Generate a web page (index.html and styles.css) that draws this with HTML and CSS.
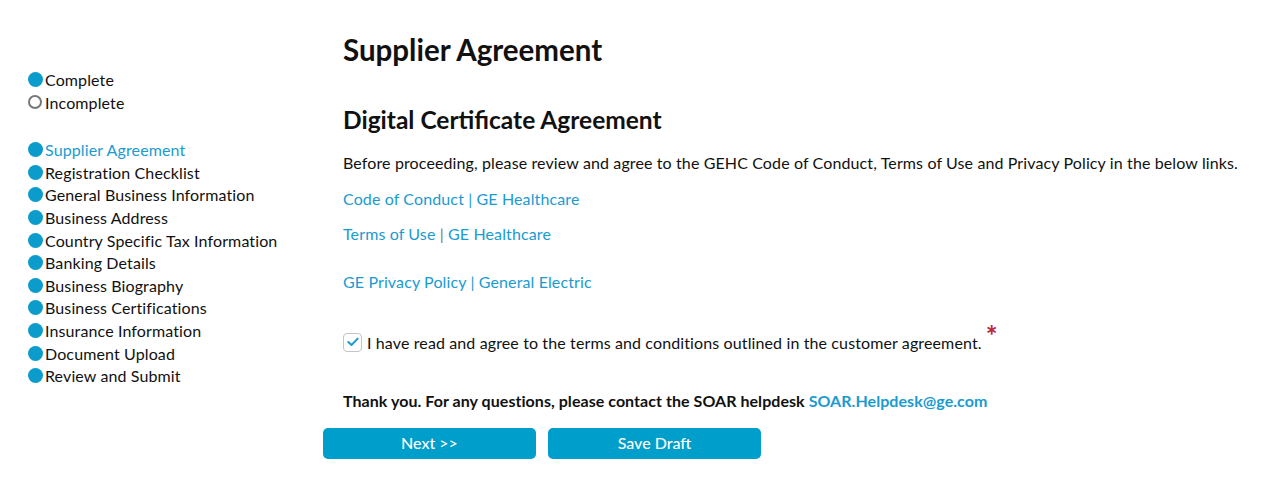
FILE: index.html
```html
<!DOCTYPE html>
<html>
<head>
<meta charset="utf-8">
<link rel="stylesheet" href="styles.css">
</head>
<body>
<div class="page">
  <aside class="sidebar">
    <ul class="legend">
      <li><span class="dot"></span>Complete</li>
      <li><span class="dot empty"></span>Incomplete</li>
    </ul>
    <ul class="steps">
      <li class="active"><span class="dot"></span>Supplier Agreement</li>
      <li><span class="dot"></span>Registration Checklist</li>
      <li><span class="dot"></span>General Business Information</li>
      <li><span class="dot"></span>Business Address</li>
      <li><span class="dot"></span>Country Specific Tax Information</li>
      <li><span class="dot"></span>Banking Details</li>
      <li><span class="dot"></span>Business Biography</li>
      <li><span class="dot"></span>Business Certifications</li>
      <li><span class="dot"></span>Insurance Information</li>
      <li><span class="dot"></span>Document Upload</li>
      <li><span class="dot"></span>Review and Submit</li>
    </ul>
  </aside>
  <main class="content">
    <h1 class="title">Supplier Agreement</h1>
    <h2 class="subtitle">Digital Certificate Agreement</h2>
    <p class="intro">Before proceeding, please review and agree to the GEHC Code of Conduct, Terms of Use and Privacy Policy in the below links.</p>
    <p class="link-row first"><a href="#">Code of Conduct | GE Healthcare</a></p>
    <p class="link-row"><a href="#">Terms of Use</a><span class="sep"> | </span><a href="#">GE Healthcare</a></p>
    <p class="link-row privacy"><a href="#">GE Privacy Policy | General Electric</a></p>
    <div class="agree">
      <span class="checkbox"><svg width="12" height="10" viewBox="0 0 12 10"><path d="M1.3 5 L4.5 8 L10.7 1.6" fill="none" stroke="#1a9bd1" stroke-width="2" stroke-linecap="round" stroke-linejoin="round"/></svg></span>
      <span class="agree-text">I have read and agree to the terms and conditions outlined in the customer agreement.</span>
      <span class="req">*</span>
    </div>
    <p class="thanks"><span class="thanks-text">Thank you. For any questions, please contact the SOAR helpdesk</span> <a href="#" class="mail">SOAR.Helpdesk@ge.com</a></p>
    <div class="actions">
      <button class="btn">Next &gt;&gt;</button>
      <button class="btn">Save Draft</button>
    </div>
  </main>
</div>
</body>
</html>
```
FILE: styles.css
```css
* { box-sizing: border-box; }
html, body { margin: 0; padding: 0; background: #fff; }
body {
  font-family: Lato, "Open Sans", sans-serif;
  color: #111;
  font-size: 16px;
  letter-spacing: 0.12px;
}
a { color: #1a9bd1; text-decoration: none; }
.page {
  display: flex;
  padding-left: 28px;
}
.sidebar {
  width: 315px;
  flex: none;
  padding-top: 68px;
}
.legend, .steps {
  list-style: none;
  margin: 0;
  padding: 0;
}
.legend li, .steps li {
  display: flex;
  align-items: center;
  height: 22.6px;
  font-size: 16px;
  color: #111;
}
.legend li:first-child { height: 23.2px; }
.steps { margin-top: 24.6px; }
.steps li.active { color: #1a9bd1; }
.dot {
  width: 15px;
  height: 15px;
  border-radius: 50%;
  background: #0b9ccb;
  margin-right: 2px;
  flex: none;
}
.dot.empty {
  background: #fff;
  border: 2px solid #777;
  width: 14px;
  height: 14px;
  margin-right: 3px;
}
.content {
  flex: 1;
  padding-top: 30px;
}
.title {
  font-size: 29.5px;
  font-weight: 700;
  margin: 0;
  line-height: 40px;
  color: #111;
  letter-spacing: 0;
}
.subtitle {
  font-size: 24.5px;
  font-weight: 700;
  margin: 34px 0 0;
  line-height: 32px;
  color: #111;
  letter-spacing: 0;
}
.intro {
  margin: 16px 0 0;
  line-height: 22px;
}
.link-row { margin: 13px 0 0; line-height: 22px; }
.link-row.first { margin-top: 14px; }
.link-row .sep { color: #777; }
.link-row.privacy { margin-top: 26px; }
.agree {
  display: flex;
  align-items: center;
  margin-top: 37px;
  height: 24px;
  position: relative;
}
.checkbox {
  width: 19px;
  height: 19px;
  border: 1px solid #c4c4c4;
  border-radius: 4px;
  display: flex;
  align-items: center;
  justify-content: center;
  margin-right: 5px;
}
.agree-text { font-size: 16px; }
.req {
  color: #b8263f;
  font-size: 28px;
  font-weight: 700;
  align-self: flex-start;
  margin-left: 4px;
  margin-top: -6px;
  line-height: 22px;
}
.thanks {
  margin: 36px 0 0;
  font-weight: 700;
  line-height: 22px;
  font-size: 16px;
  letter-spacing: 0.05px;
}
.mail { color: #1a9bd1; }
.actions {
  display: flex;
  gap: 12px;
  margin-top: 16px;
  margin-left: -20px;
}
.btn {
  width: 213px;
  height: 31px;
  border: none;
  border-radius: 5px;
  background: #009ecb;
  color: #fff;
  font-family: Lato, sans-serif;
  font-size: 16px;
  font-weight: 500;
  padding: 0 0 3px;
}
```
